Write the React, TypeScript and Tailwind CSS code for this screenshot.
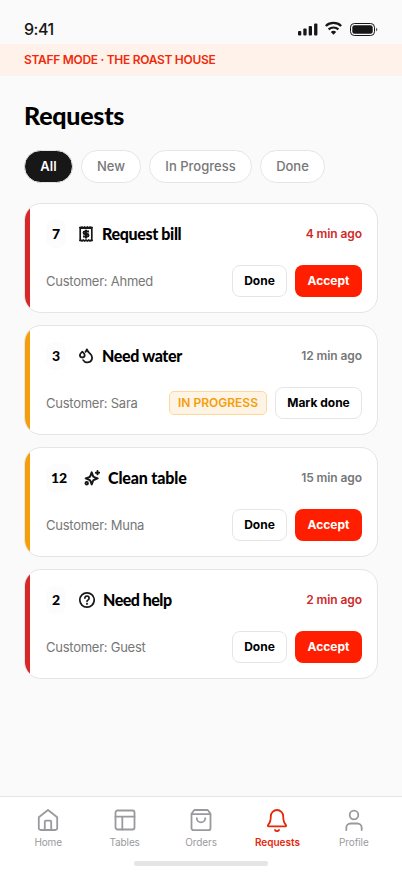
import type { ReactNode } from "react";

type Request = {
  table: string;
  badgeWidth: string;
  icon: ReactNode;
  title: string;
  titleClass: string;
  customer: string;
  time: string;
  urgent: boolean;
  inProgress?: boolean;
};

const ReceiptIcon = () => (
  <svg width="16" height="18" viewBox="0 0 16 18" fill="none" stroke="#171717">
    <path d="M2.200 2v14M13.800 2v14" strokeWidth="1.700" />
    <path
      d="M1.500 2l1.200.9 1.300-.9 1.300.9 1.300-.9L8 2.900l1.400-.9 1.300.9 1.300-.9 1.300.9 1.200-.9M1.500 16l1.200-.9 1.300.9 1.300-.9 1.300.9 1.400-.9 1.400.9 1.300-.9 1.300.9 1.300-.9 1.200.9"
      strokeWidth="1.700"
    />
    <path
      d="M11 6.500H6.800a1.250 1.250 0 0 0 0 2.500h2.400a1.250 1.250 0 0 1 0 2.500H5M8 4.700v8.700"
      strokeWidth="2"
    />
  </svg>
);

const WaterIcon = () => (
  <svg
    width="16"
    height="18"
    viewBox="0 0 16 18"
    fill="none"
    stroke="#171717"
    strokeWidth="1.800"
    strokeLinecap="round"
    strokeLinejoin="round"
  >
    <path d="M4.300 4.700C3.200 5.700 1.900 6.600 1.900 8.100a2.400 2.400 0 0 0 4.800 0C6.700 6.600 5.400 5.700 4.300 4.700z" />
    <path d="M7.500 4.800c.7-.8 1.200-1.600 1.400-2.500.6 2.200 1.900 3.200 3.200 4.400 1.300 1.200 2 2.500 2 4a4.800 4.800 0 0 1-8.900 2.400" />
  </svg>
);

const SparkIcon = () => (
  <svg width="16" height="18" viewBox="0 0 16 18" fill="none" stroke="#171717">
    <path
      d="M7.700 3.400l1.300 3.500c.2.600.6 1 1.200 1.200l3.500 1.300-3.500 1.300c-.6.200-1 .6-1.200 1.200l-1.300 3.500-1.300-3.500c-.2-.6-.6-1-1.200-1.200L1.700 9.400l3.500-1.300c.6-.2 1-.6 1.200-1.200z"
      strokeWidth="2"
      strokeLinejoin="round"
    />
    <path d="M13.500 2v3.400M11.800 3.700h3.400" strokeWidth="1.900" strokeLinecap="round" />
    <circle cx="2.700" cy="14.200" r="1.300" strokeWidth="1.800" />
  </svg>
);

const HelpIcon = () => (
  <svg
    width="17"
    height="18"
    viewBox="0 0 17 18"
    fill="none"
    stroke="#171717"
    strokeWidth="1.700"
    strokeLinecap="round"
  >
    <circle cx="9" cy="9" r="7.200" />
    <path d="M6.900 7.100a2.100 2.100 0 1 1 3.200 1.800c-.7.400-1.100.7-1.100 1.400" />
    <path d="M9 12.800v.1" strokeWidth="1.900" />
  </svg>
);

const requests: Request[] = [
  {
    table: "7",
    badgeWidth: "w-5",
    icon: <ReceiptIcon />,
    title: "Request bill",
    titleClass: "tracking-[-0.35px]",
    customer: "Ahmed",
    time: "4 min ago",
    urgent: true,
  },
  {
    table: "3",
    badgeWidth: "w-5",
    icon: <WaterIcon />,
    title: "Need water",
    titleClass: "tracking-[-0.35px]",
    customer: "Sara",
    time: "12 min ago",
    urgent: false,
    inProgress: true,
  },
  {
    table: "12",
    badgeWidth: "w-[26px]",
    icon: <SparkIcon />,
    title: "Clean table",
    titleClass: "tracking-[-0.15px]",
    customer: "Muna",
    time: "15 min ago",
    urgent: false,
  },
  {
    table: "2",
    badgeWidth: "w-5",
    icon: <HelpIcon />,
    title: "Need help",
    titleClass: "tracking-[-0.5px]",
    customer: "Guest",
    time: "2 min ago",
    urgent: true,
  },
];

const tabs = [
  {
    label: "Home",
    icon: (
      <>
        <path d="M2.800 9.300 12 2l9.200 7.300v10.900a1.800 1.800 0 0 1-1.800 1.800H4.600a1.800 1.800 0 0 1-1.800-1.800z" />
        <path d="M8.800 22v-8.500a.8.800 0 0 1 .8-.8h4.800a.8.800 0 0 1 .8.800V22" />
      </>
    ),
  },
  {
    label: "Tables",
    icon: (
      <>
        <rect x="2.500" y="2.500" width="19" height="19" rx="2" />
        <path d="M2.500 8.700h19M9.300 8.700v12.800" />
      </>
    ),
  },
  {
    label: "Orders",
    icon: (
      <>
        <path d="M5.300 2h13.400l2.800 3.800v14.400a2 2 0 0 1-2 2h-15a2 2 0 0 1-2-2V5.800zM2.500 6.200h19" />
        <path d="M16.200 10.200a4.200 4.200 0 0 1-8.400 0" />
      </>
    ),
  },
  {
    label: "Requests",
    icon: (
      <>
        <path d="M18.200 8.200a6.200 6.200 0 0 0-12.400 0c0 5-1 6.900-2.700 8.700a.8.800 0 0 0 .6 1.400h16.600a.8.800 0 0 0 .6-1.400c-1.700-1.800-2.700-3.700-2.700-8.700z" />
        <path d="M10 22a2.300 2.300 0 0 0 4 0" />
      </>
    ),
  },
  {
    label: "Profile",
    icon: (
      <>
        <circle cx="12" cy="7" r="4.300" />
        <path d="M4.300 22v-2.200a4.300 4.300 0 0 1 4.300-4.300h6.800a4.300 4.300 0 0 1 4.300 4.300V22" />
      </>
    ),
  },
];

const StatusBar = () => (
  <div className="flex h-11 shrink-0 items-start justify-between px-6 pt-[19px]">
    <span className="text-[16px] leading-5 font-medium tracking-[-0.5px] text-[#171717]">
      9:41
    </span>
    <svg
      width="82"
      height="16"
      viewBox="0 0 82 16"
      fill="none"
      className="-mr-px mt-[2px]"
    >
      <g fill="#171717">
        <rect x="1" y="10" width="3.300" height="4.500" rx="1" />
        <rect x="6.300" y="7.500" width="3.300" height="7" rx="1" />
        <rect x="11.700" y="5" width="3.300" height="9.500" rx="1" />
        <rect x="17.100" y="2.500" width="3.300" height="12" rx="1" />
        <path d="M36.500 13.800 33.800 11a4 4 0 0 1 5.400 0z" />
      </g>
      <path
        d="M28.800 5a11.300 11.300 0 0 1 15.400 0M31.600 8.400a7.200 7.200 0 0 1 9.800 0"
        stroke="#171717"
        strokeWidth="2.200"
      />
      <rect x="53.500" y="2.500" width="24" height="12" rx="3.800" stroke="#171717" />
      <rect x="55.300" y="4.300" width="20.400" height="8.400" rx="2.300" fill="#171717" />
      <path d="M79.300 6.700v3.600c1.300-.5 1.300-3.100 0-3.600z" fill="#171717" />
    </svg>
  </div>
);

const RequestCard = ({ request }: { request: Request }) => (
  <article className="flex h-[110px] overflow-hidden rounded-[17px] border border-[#e5e5e5] bg-white">
    <div
      className={`${request.urgent ? "bg-[#d92626]" : "bg-[#f59e0b]"} w-[5px]`}
    />
    <div className="flex flex-1 flex-col justify-between py-[15px] pr-[15px] pl-4">
      <div className="flex h-[29px] items-center">
        <span
          className={`${request.badgeWidth} flex h-7 items-center justify-center rounded-lg bg-[#fcfcfc] font-[Lato] text-[14px] font-black text-black`}
        >
          {request.table}
        </span>
        <span className="ml-3">{request.icon}</span>
        <h2
          className={`${request.titleClass} ml-2 font-[Lato] text-[16px] font-black text-black`}
        >
          {request.title}
        </h2>
        <span
          className={`${
            request.urgent ? "text-[#cf2a2a]" : "text-[#777777]"
          } ml-auto text-[12px] font-semibold tracking-[-0.08px]`}
        >
          {request.time}
        </span>
      </div>
      <div className="flex h-8 items-center gap-2">
        <span className="mr-auto pt-px text-[13px] tracking-[-0.25px] text-[#777777]">
          Customer: {request.customer}
        </span>
        {request.inProgress ? (
          <>
            <span className="flex h-6 w-[98px] items-center justify-center rounded-[5px] border border-[#fcd99a] bg-[#fef4e5] text-[12px] font-semibold text-[#f59e0b]">
              IN PROGRESS
            </span>
            <button className="h-8 w-[87px] rounded-lg border border-[#e5e5e5] text-[12px] font-bold text-black">
              Mark done
            </button>
          </>
        ) : (
          <>
            <button className="h-8 w-[55px] rounded-lg border border-[#e5e5e5] text-[12px] font-bold text-black">
              Done
            </button>
            <button className="h-8 w-[67px] rounded-lg bg-[#ff1f00] text-[12px] font-bold text-white">
              Accept
            </button>
          </>
        )}
      </div>
    </div>
  </article>
);

const TabBar = () => (
  <nav className="flex h-[78px] shrink-0 flex-col items-center border-t border-[#e5e5e5] bg-white px-[10px] pt-[11px]">
    <ul className="flex w-full">
      {tabs.map(({ label, icon }) => (
        <li
          key={label}
          className={`${
            label === "Requests"
              ? "font-semibold text-[#e5280a]"
              : "tracking-[-0.1px] text-[#9a9a9e]"
          } flex flex-1 flex-col items-center gap-[2px] text-[10px] leading-4`}
        >
          <svg
            width="24"
            height="24"
            viewBox="0 0 24 24"
            fill="none"
            stroke="currentColor"
            strokeWidth="1.800"
            strokeLinecap="round"
            strokeLinejoin="round"
          >
            {icon}
          </svg>
          {label}
        </li>
      ))}
    </ul>
    <div className="mt-[11px] h-[5px] w-[134px] rounded-[2px] bg-[#e5e5e5]" />
  </nav>
);

export default function App() {
  return (
    <main className="flex h-[874px] w-[402px] flex-col overflow-hidden bg-[#fafafa] font-[Inter,sans-serif]">
      <StatusBar />
      <div className="flex h-8 shrink-0 items-center bg-[#fff2ea] px-6 text-[12px] font-semibold tracking-[-0.3px] text-[#f02a0a]">
        STAFF MODE · THE ROAST HOUSE
      </div>
      <div className="flex-1 px-6 pt-[23px]">
        <h1 className="font-[Lato] text-[25px] leading-8 font-black tracking-[-0.25px] text-black">
          Requests
        </h1>
        <div className="mt-[19px] flex h-[33px] gap-2 text-[13px] font-medium text-[#777777]">
          <button className="w-[49px] rounded-full border border-[#e5e5e5] bg-[#171717] font-semibold text-white">
            All
          </button>
          <button className="w-[60px] rounded-full border border-[#e5e5e5] bg-white">
            New
          </button>
          <button className="w-[103px] rounded-full border border-[#e5e5e5] bg-white">
            In Progress
          </button>
          <button className="w-[65px] rounded-full border border-[#e5e5e5] bg-white">
            Done
          </button>
        </div>
        <div className="mt-5 flex flex-col gap-3">
          {requests.map((request) => (
            <RequestCard key={request.table} request={request} />
          ))}
        </div>
      </div>
      <TabBar />
    </main>
  );
}
